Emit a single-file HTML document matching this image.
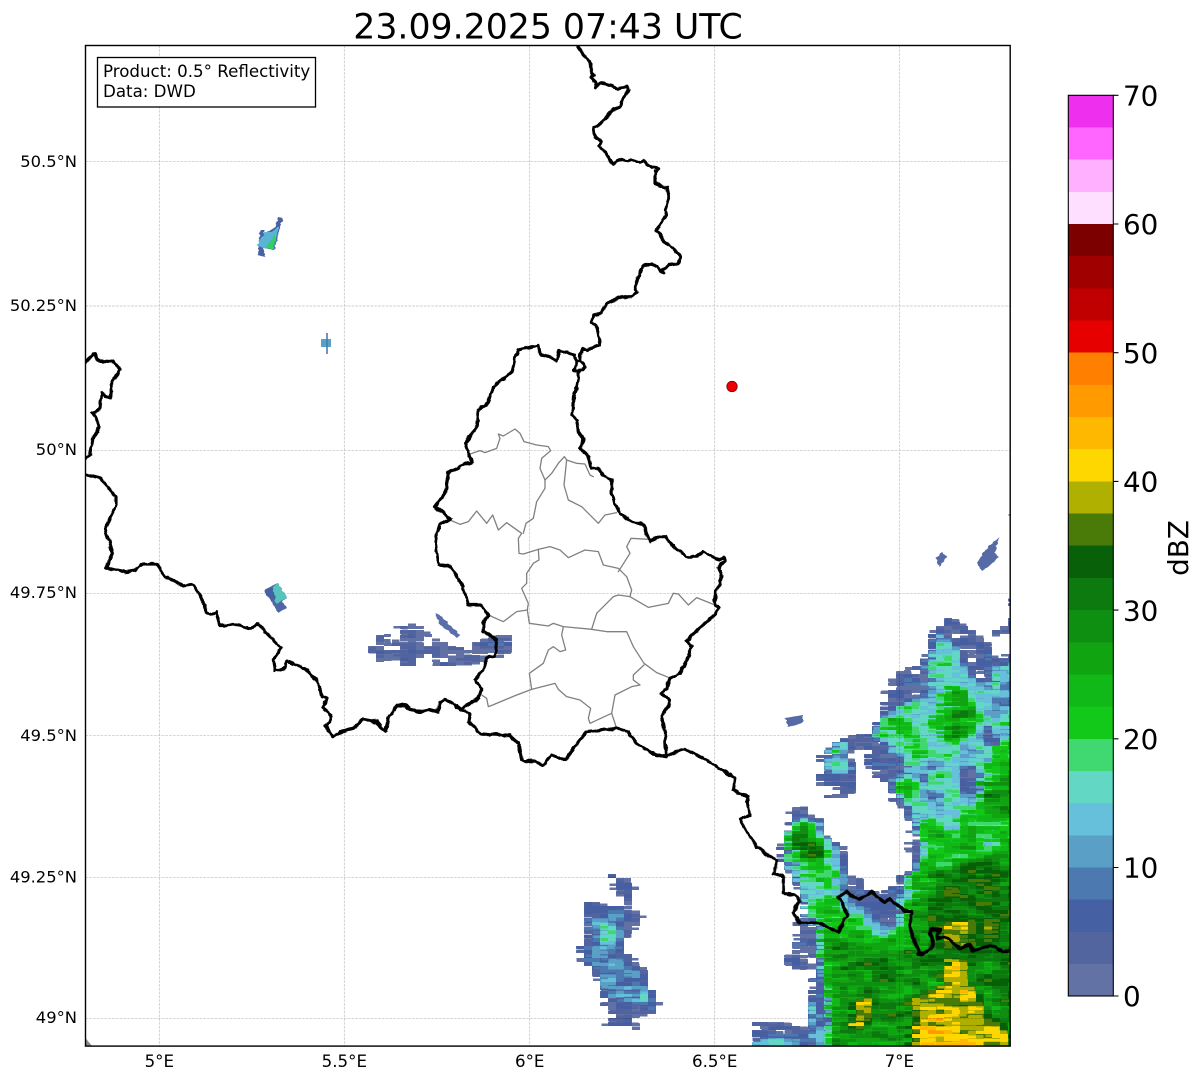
<!DOCTYPE html>
<html lang="en">
<head>
<meta charset="utf-8">
<title>23.09.2025 07:43 UTC</title>
<style>
html,body{margin:0;padding:0;background:#fff}
svg{display:block;font-family:"DejaVu Sans","Liberation Sans",sans-serif}
.b{fill:none;stroke:#000;stroke-width:9.5;stroke-linejoin:round;stroke-linecap:round}
.g{fill:none;stroke:#808080;stroke-width:3.9;stroke-linejoin:round;stroke-linecap:round}
.t{font-size:16.67px;fill:#000}
.l{font-size:16.35px;fill:#000}
.c{font-size:27.78px;fill:#000}
</style>
</head>
<body>
<svg xmlns="http://www.w3.org/2000/svg" width="1202" height="1081" viewBox="0 0 1202 1081">
<defs>
<clipPath id="ax"><rect x="85.5" y="45.5" width="924.5" height="1000.5"/></clipPath>
<filter id="radar" filterUnits="userSpaceOnUse" x="40" y="10" width="1020" height="1070" color-interpolation-filters="sRGB">
<feGaussianBlur in="SourceGraphic" stdDeviation="2.4" result="f"/>
<feTurbulence type="fractalNoise" baseFrequency="0.04 0.3" numOctaves="2" seed="7" result="t1"/>
<feColorMatrix in="t1" type="matrix" values="1 0 0 0 0  0 0 0 0 .5  1 0 0 0 0  0 0 0 0 1" result="n1"/>
<feDisplacementMap in="f" in2="n1" scale="16" xChannelSelector="R" yChannelSelector="G" result="d"/>
<feColorMatrix in="n1" type="matrix" values="1 0 0 0 0  1 0 0 0 0  1 0 0 0 0  0 0 0 0 1" result="n1g"/>
<feComposite in="d" in2="n1g" operator="arithmetic" k1="0" k2="1" k3=".15" k4="-.075" result="s1"/>
<feTurbulence type="fractalNoise" baseFrequency="0.05 0.1" numOctaves="1" seed="3" result="t2"/>
<feColorMatrix in="t2" type="matrix" values="1 0 0 0 0  1 0 0 0 0  1 0 0 0 0  0 0 0 0 1" result="n2"/>
<feComposite in="s1" in2="n2" operator="arithmetic" k1="0" k2="1" k3=".2" k4="-.13" result="s2"/>
<feFlood x="43" y="11" width="2" height="2" flood-color="#fff" flood-opacity="1"/>
<feComposite width="8" height="4"/>
<feTile result="grid"/>
<feComposite in="s2" in2="grid" operator="in"/>
<feMorphology operator="dilate" radius="3 1" result="mosaic"/>
<feComponentTransfer in="mosaic">
<feFuncR type="discrete" tableValues="1 1 1 1 1 1 1 1 1 1 1 1 .384 .322 .271 .298 .353 .4 .384 .251 .071 .063 .063 .059 .047 .031 .29 .69 1 1 1 1 .902 .753 .627 .486"/>
<feFuncG type="discrete" tableValues="1 1 1 1 1 1 1 1 1 1 1 1 .447 .396 .376 .478 .624 .753 .847 .847 .784 .722 .647 .561 .478 .376 .478 .69 .843 .722 .608 .502 0 0 0 0"/>
<feFuncB type="discrete" tableValues="1 1 1 1 1 1 1 1 1 1 1 1 .643 .624 .639 .69 .773 .863 .769 .439 .094 .094 .063 .071 .055 .031 .031 0 0 0 0 0 0 0 0 0"/>
</feComponentTransfer>
<feGaussianBlur stdDeviation=".35"/>
</filter>
<filter id="jag" filterUnits="userSpaceOnUse" x="85" y="45" width="926" height="1002" color-interpolation-filters="sRGB">
<feTurbulence type="fractalNoise" baseFrequency="0.05 0.4" numOctaves="1" seed="11" result="t"/>
<feColorMatrix in="t" type="matrix" values="1 0 0 0 0  0 0 0 0 .5  1 0 0 0 0  0 0 0 0 1" result="n"/>
<feDisplacementMap in="SourceGraphic" in2="n" scale="4" xChannelSelector="R" yChannelSelector="G"/>
</filter>
<filter id="wig" filterUnits="userSpaceOnUse" x="85" y="45" width="926" height="1002" color-interpolation-filters="sRGB">
<feTurbulence type="fractalNoise" baseFrequency="0.13" numOctaves="2" seed="5" result="t"/>
<feColorMatrix in="t" type="matrix" values="1 0 0 0 0  0 1 0 0 0  0 0 1 0 0  0 0 0 0 1" result="n"/>
<feDisplacementMap in="SourceGraphic" in2="n" scale="4" xChannelSelector="R" yChannelSelector="G"/>
</filter>
</defs>

<rect width="1202" height="1081" fill="#fff"/>

<g clip-path="url(#ax)">
<rect x="85" y="45" width="926" height="1002" fill="#fff"/>
<!-- grid -->
<g stroke="#bdbdbd" stroke-width=".7" stroke-dasharray="2.6 1.2" fill="none">
<path d="M85.5 161.3H1010M85.5 306H1010M85.5 450.3H1010M85.5 593.3H1010M85.5 735.7H1010M85.5 877.7H1010M85.5 1018.3H1010"/>
<path d="M159.3 45.5V1046M344.3 45.5V1046M529.7 45.5V1046M714.7 45.5V1046M899.3 45.5V1046"/>
</g>

<!-- radar echoes: reflectivity field mapped through the colour scale -->
<g filter="url(#radar)" style="mix-blend-mode:multiply">
<rect x="0" y="0" width="1202" height="1081" fill="#2a2a2a"/>

<!-- centre band -->
<path d="M368 647 373 644 377 638 385 633 392 648 402 637 398 625 410 623 427 628 440 640 452 645 460 648 468 645 476 641 490 637 505 632 517 645 510 655 502 658 490 662 473 663 463 667 453 667 435 662 425 655 410 668 395 660 388 662 380 660 370 650Z" fill="#626262" stroke="#626262" stroke-width="4"/>

<!-- bottom-centre blob -->
<g transform="translate(560 860) scale(.33333)">
<path d="M155 43 205 55 195 78 225 85 220 110 170 103 170 85 148 72Z" fill="#646464" stroke="#646464" stroke-width="14"/>
<path d="M75 128 120 135 160 125 215 125 215 150 240 158 232 215 200 220 190 275 218 290 215 310 240 310 270 340 265 390 295 392 290 450 255 465 220 470 215 495 248 500 245 510 150 490 155 450 128 440 130 400 108 350 85 335 85 305 60 295 70 255 90 170 70 150Z" fill="#686868" stroke="#686868" stroke-width="14"/>
<path d="M95 165 165 155 210 170 178 285 200 310 250 350 265 420 220 445 170 440 135 400 120 340 75 290 80 250Z" fill="#747474"/>
<path d="M122 170 170 170 172 200 160 290 105 262 130 225Z" fill="#7e7e7e"/>
<path d="M128 210 170 200 160 270 105 255Z" fill="#888"/>
<path d="M200 392 265 385 262 430 200 430Z" fill="#7a7a7a"/>
<path d="M232 392 265 385 262 426 232 424Z" fill="#8a8a8a"/>
</g>

<!-- main mass -->
<g transform="translate(750 600) scale(.33333)">
<path d="M-20 1400 12 1318 12 1265 75 1258 112 1272 165 1278 182 1262 170 1240 205 1235 180 1205 165 1165 195 1160 195 1110 130 1108 95 1078 125 1070 122 1030 145 1020 140 965 165 930 160 880 130 870 118 825 90 780 92 728 110 725 108 690 130 670 122 620 165 615 190 628 195 645 222 660 228 710 262 725 285 735 300 820 335 828 345 860 405 885 430 850 455 820 490 795 510 780 480 780 472 735 495 720 475 670 450 620 425 610 440 590 410 560 370 525 355 490 360 440 300 460 325 540 295 595 230 605 225 575 198 558 215 520 205 490 222 460 270 420 310 405 355 405 375 385 385 350 395 330 405 290 405 255 440 220 470 205 515 195 520 170 545 130 545 95 600 50 640 75 680 95 720 130 735 180 840 140 840 100 725 110 750 75 775 45 790 -40 860 -40 860 1420 -20 1420Z" fill="#646464" stroke="#646464" stroke-width="10" stroke-linejoin="round"/>
<!-- mid blue -->
<path d="M0 1420 15 1320 110 1300 200 1290 235 1420Z" fill="#747474"/>
<path d="M15 1420 20 1318 110 1312 115 1420Z" fill="#828282"/>
<!-- cyan upper -->
<path d="M375 385 410 340 480 300 530 290 545 190 575 100 615 130 640 200 700 260 735 190 860 160 860 730 700 770 560 800 480 845 520 785 510 720 480 640 440 560 420 490 440 430 380 430Z" fill="#858585"/>
<!-- hook -->
<path d="M240 462 290 420 300 450 295 520 240 530 228 490Z" fill="#858585"/>
<path d="M225 530 300 525 298 590 232 600 205 555Z" fill="#646464"/>
<!-- lower-left cyan band -->
<path d="M105 730 125 690 200 660 225 720 270 750 290 850 280 872 345 900 440 955 465 930 530 880 560 800 480 845 440 900 510 1010 440 1010 360 990 290 990 215 990 200 1180 230 1420 185 1420 190 1170 205 1100 200 980 165 920 155 880 135 830 110 790Z" fill="#858585"/>
<path d="M300 890 345 880 405 905 455 935 430 980 380 970 340 930Z" fill="#6a6a6a"/>
<path d="M380 930 410 920 450 940 430 970 400 960Z" fill="#666"/>
<path d="M330 960 370 960 410 1000 450 980 470 950 480 1000 420 1010 370 1010Z" fill="#858585"/>
<path d="M165 1000 205 985 215 1100 155 1108 130 1070 160 1040Z" fill="#666"/>
<!-- dark-blue patches on cyan -->
<path d="M375 440 465 470 465 520 410 560 360 520Z" fill="#646464"/>
<path d="M620 510 680 490 690 580 640 590Z" fill="#686868"/>
<path d="M695 370 760 430 720 450 690 420Z" fill="#686868"/>
<path d="M495 515 540 530 520 560Z" fill="#686868"/>
<path d="M545 590 575 590 570 620 550 615Z" fill="#686868"/>
<path d="M440 610 480 620 505 660 480 660Z" fill="#666"/>
<path d="M470 730 510 730 510 780 480 780Z" fill="#666"/>
<path d="M645 640 690 625 710 680 660 660Z" fill="#6c6c6c"/>
<path d="M700 240 745 200 860 260 860 300 730 330Z" fill="#747474"/>
<!-- light-green flecks -->
<path d="M580 170 605 165 610 215 575 230Z" fill="#929292"/>
<path d="M735 220 760 210 750 270 725 280Z" fill="#929292"/>
<path d="M255 440 285 430 262 480Z" fill="#929292"/>
<path d="M560 530 590 525 590 545 570 545Z" fill="#989898"/>
<path d="M615 620 660 580 650 620 625 640Z" fill="#929292"/>
<!-- greens -->
<path d="M395 370 440 340 470 350 500 395 540 450 545 475 490 475 460 420 410 385Z" fill="#9b9b9b"/>
<path d="M545 375 600 250 640 260 700 370 650 410 610 445 580 410Z" fill="#9b9b9b"/>
<path d="M605 270 635 270 690 375 625 425 590 385Z" fill="#a6a6a6"/>
<path d="M430 560 480 530 505 590 460 600Z" fill="#9b9b9b"/>
<path d="M700 590 715 490 770 415 860 405 860 770 710 740 680 690 620 700 640 640Z" fill="#9b9b9b"/>
<path d="M700 570 740 530 860 490 860 660 720 650Z" fill="#a6a6a6"/>
<path d="M220 1420 240 1250 215 1100 205 985 290 975 320 940 370 1000 410 1010 470 950 490 880 480 830 530 770 510 695 545 630 590 700 620 700 670 680 700 750 860 690 860 1420Z" fill="#9b9b9b"/>
<path d="M105 720 120 680 175 650 205 700 225 715 230 790 235 860 195 840 150 790Z" fill="#9b9b9b"/>
<path d="M130 700 165 670 210 730 235 770 170 790 140 750Z" fill="#a8a8a8"/>
<path d="M145 725 215 735 210 768 165 775Z" fill="#b5b5b5"/>
<path d="M135 700 170 695 170 715 140 715Z" fill="#c0c0c0"/>
<path d="M185 732 212 735 210 745 185 745Z" fill="#c0c0c0"/>
<path d="M165 910 265 890 295 955 270 985 210 965 170 950Z" fill="#9b9b9b"/>
<!-- dark greens -->
<path d="M240 1420 262 1200 240 1050 290 1020 380 1040 470 1060 500 990 490 900 540 830 590 790 860 740 860 1420Z" fill="#a9a9a9"/>
<path d="M480 1100 530 1050 540 870 600 810 860 770 860 1110 700 1080 600 1090Z" fill="#b6b6b6"/>
<path d="M345 1080 410 1070 435 1160 370 1140Z" fill="#b6b6b6"/>
<path d="M265 1030 335 1020 345 1060 270 1080Z" fill="#b0b0b0"/>
<path d="M280 1250 330 1220 320 1290 280 1290Z" fill="#b4b4b4"/>
<path d="M590 960 670 950 680 1040 600 1020Z" fill="#c6c6c6"/>
<path d="M680 1120 860 1100 860 1230 740 1200Z" fill="#b6b6b6"/>
<!-- yellows -->
<path d="M480 1195 570 1165 595 1075 645 1075 665 1165 710 1225 775 1290 810 1420 455 1420 490 1280Z" fill="#c7c7c7"/>
<path d="M310 1220 340 1185 370 1190 372 1260 320 1285Z" fill="#c4c4c4"/>
<path d="M312 1262 345 1255 345 1285 315 1285Z" fill="#cccccc"/>
<path d="M582 1140 610 1100 645 1105 625 1160 590 1165Z" fill="#cfcfcf"/>
<path d="M500 1240 600 1215 640 1250 710 1265 760 1295 800 1420 495 1420Z" fill="#cdcdcd"/>
<path d="M555 1245 595 1250 595 1295 560 1285Z" fill="#d2d2d2"/>
<path d="M578 998 605 1000 590 1020Z" fill="#cacaca"/>
</g>
</g>

<!-- small echoes -->
<g filter="url(#jag)">
<path d="M258 255 260 230 264 230 264 234 275 227 278 217 283 218 280 227 277 240 274 250 263 248 265 257Z" fill="#4a62a4"/>
<path d="M257 245 265 232 272 232 277 227 279 227 275 242 273 249 263 248Z" fill="#5ab4d4"/>
<path d="M265 248 275 235 275 242 272 249Z" fill="#2fd25e"/>
<path d="M264 590 278 583 287 598 282 602 287 608 278 613 272 602Z" fill="#4f66a4"/>
<path d="M272 588 278 583 287 598 276 604Z" fill="#56c4bc"/>
<path d="M264 590 272 587 276 598 270 600Z" fill="#4560a3"/>
<path d="M435 613 440 615 460 635 457 638 440 625Z" fill="#5a6ea8"/>
<path d="M936 558 942 552 947 557 939 567Z" fill="#566aa5"/>
<path d="M977 563 985 550 999 537 995 553 999 557 988 567 982 571Z" fill="#566aa5"/>
<path d="M785 718 790 717 803 715 803 723 788 727Z" fill="#566aa5"/>
</g>
<path d="M321 339H331V347H321Z" fill="#5a9fc5"/><path d="M327 333V354" stroke="#4c7ab0" stroke-width="1.6"/>
<path d="M1008 515 1011 513V517Z" fill="#566aa5"/>
<path d="M85.5 1038 92 1046H85.5Z" fill="#8a8a8a"/>

<!-- grey admin lines -->
<g transform="translate(420 330) scale(.33333)">
<path class="g" d="M150 372 180 362 195 368 230 355 240 325 235 312 250 318 285 297 300 310 312 335 350 345 385 350 392 362 365 385 360 415 375 450"/>
<path class="g" d="M375 450 395 430 415 400 433 380 440 390 470 400 495 402 510 435 520 440"/>
<path class="g" d="M440 390 432 465 445 510 485 530 535 580 555 555 590 548"/>
<path class="g" d="M375 450 375 475 350 515 340 565 318 580 310 610"/>
<path class="g" d="M90 570 120 583 145 575 170 543 200 580 218 555 235 600 260 578 305 610 295 625 297 670 310 672 355 658 390 650 420 660 445 683 495 660 535 665 550 705 595 715 620 740 635 780 630 800"/>
<path class="g" d="M595 725 630 670 620 650 633 625 685 628"/>
<path class="g" d="M355 658 357 690 340 700 320 730 320 760 305 775 325 820 322 840 328 880 385 888 400 880 430 890 515 898"/>
<path class="g" d="M322 840 290 845 250 875 205 855"/>
<path class="g" d="M515 898 530 850 580 800 595 795 630 800 685 832 745 820 760 790 775 792 805 825 830 803 885 825"/>
<path class="g" d="M515 898 560 905 620 905 640 950 672 1000 710 1028 745 1042"/>
<path class="g" d="M430 890 425 915 437 960 420 965 400 950 385 960 370 1000 328 1030 335 1078"/>
<path class="g" d="M672 1005 640 1035 640 1050 660 1065 635 1070 585 1095 575 1150 590 1195"/>
<path class="g" d="M575 1150 510 1180 505 1165 512 1135 480 1110 440 1100 415 1078 405 1060 335 1078"/>
<path class="g" d="M335 1078 290 1095 218 1125 205 1130 200 1105 185 1095"/>
</g>

<!-- national borders -->
<g filter="url(#wig)">
<g transform="translate(560 40) scale(.33333)">
<path class="b" d="M50 10 70 45 88 65 95 90 100 105 92 115 108 130 105 145 118 130 150 135 170 145 200 140 207 150 195 170 183 185 180 200 160 208 140 230 125 248 100 265 105 290 125 305 115 320 135 335 158 372 185 358 205 362 215 358 235 368 250 362 278 380 295 385 285 395 285 430 322 443 327 470 315 510 318 525 300 555 288 572 315 605 345 630 360 650 355 670 325 675 305 690 310 700 275 670 248 680 240 700 225 740 230 755 215 770 190 770 140 790 125 820 102 825 93 848 108 860 115 880 120 915 80 930 68 925 62 950"/>
</g>
<g transform="translate(420 330) scale(.33333)">
<path class="b" d="M482 75 480 92 498 110 485 122 462 122 470 95 480 92M478 125 470 175 462 200 460 235 455 255 470 270 475 305 490 325 482 355 505 380 515 415 535 415 550 440 575 450 575 490 585 520 600 550 640 575 670 585 685 625 690 635 710 620 735 620 760 650 800 680 830 680 850 665 880 685 900 690 912 680 915 692 895 715 905 740 900 765 885 785 885 825 900 835 885 855 850 885 820 910 800 935 815 950 800 990 780 1030 750 1045 740 1075 725 1090 750 1110 745 1130 725 1160 735 1210 738 1280"/>
<path class="b" d="M470 95 465 75 420 60 410 90 360 70 355 45 295 60 285 85 275 125 220 170 205 220 175 240 170 290 135 340 155 395 120 410 85 430 75 490 45 530 90 565 60 585 45 630 55 705 90 710 130 770 145 825 180 825 205 855 190 880 190 905 230 930 225 980 200 985 190 1020 165 1050 185 1075 175 1105 130 1135 120 1140 150 1150 145 1175 180 1210 240 1215 270 1218 295 1240 305 1290 345 1295 370 1305 395 1275 435 1290 465 1250 500 1205 590 1195 625 1205 650 1240 695 1270 735 1280 795 1255 830 1275 870 1295 905 1320"/>
</g>
<path d="M721.7 770 735 778 733 790 747 797 750 815 740 820 750 837" fill="none" stroke="#000" stroke-width="3.1" stroke-linejoin="round"/>
<g transform="translate(750 600) scale(.33333)">
<path class="b" d="M0 710 20 740 60 770 80 780 72 820 100 830 100 880 135 885 150 905 128 935 150 970 210 968 265 998 280 960 295 950 265 890 290 875 325 900 365 875 405 908 420 897 460 930 485 932 480 980 505 1060 520 1062 550 1035 540 990 570 990 560 1015 585 1010 630 1045 660 1035 670 1055 720 1035 760 1055 785 1050"/>
</g>
<g transform="translate(80 340) scale(.33333)">
<path class="b" d="M10 75 42 40 50 62 100 65 122 90 95 125 95 175 80 170 65 160 60 205 38 218 50 245 60 260 40 290 30 345 10 362"/>
<path class="b" d="M10 401 65 415 80 440 108 470 108 500 75 565 85 600 97 640 78 685 90 685 135 695 165 690 185 672 230 672 255 708 310 738 340 733 375 795 375 815 395 825 410 815 420 855 470 855 510 865 535 852 605 925 580 960 585 993 615 985 622 962 675 985 715 1025 725 1070 740 1075 728 1100 755 1130 750 1145 735 1155 758 1190 780 1175 820 1165 850 1138 890 1145 915 1175 925 1135 950 1100 970 1095 1015 1117 1045 1110 1075 1115 1080 1085 1095 1078 1140 1105"/>
</g>
</g>

<circle cx="732" cy="386.5" r="5.2" fill="#f00000" stroke="#700" stroke-width=".8"/>
</g>

<!-- axes frame -->
<rect x="85.5" y="45.5" width="924.7" height="1000.6" fill="none" stroke="#000" stroke-width="1.4"/>

<!-- legend -->
<rect x="97.5" y="57.5" width="218" height="49.5" fill="#fff" stroke="#000" stroke-width="1.3"/>
<text x="103" y="77" class="t">Product: 0.5° Reflectivity</text>
<text x="103" y="97" class="t">Data: DWD</text>

<!-- title -->
<text x="548" y="38.5" text-anchor="middle" font-size="34.7" fill="#000">23.09.2025 07:43 UTC</text>

<!-- tick labels -->
<g class="l" text-anchor="end">
<text x="77" y="167">50.5°N</text>
<text x="77" y="311">50.25°N</text>
<text x="77" y="455">50°N</text>
<text x="77" y="598">49.75°N</text>
<text x="77" y="741">49.5°N</text>
<text x="77" y="882.5">49.25°N</text>
<text x="77" y="1023">49°N</text>
</g>
<g class="t" text-anchor="middle">
<text x="159.3" y="1067">5°E</text>
<text x="344.3" y="1067">5.5°E</text>
<text x="529.7" y="1067">6°E</text>
<text x="714.7" y="1067">6.5°E</text>
<text x="899.3" y="1067">7°E</text>
</g>

<!-- colorbar -->
<g shape-rendering="crispEdges">
<rect x="1068" y="95.3" width="45.3" height="32.6" fill="#ee30ee"/>
<rect x="1068" y="127.5" width="45.3" height="32.6" fill="#ff66ff"/>
<rect x="1068" y="159.6" width="45.3" height="32.6" fill="#ffb0ff"/>
<rect x="1068" y="191.8" width="45.3" height="32.6" fill="#ffdfff"/>
<rect x="1068" y="224" width="45.3" height="32.6" fill="#7c0000"/>
<rect x="1068" y="256.2" width="45.3" height="32.6" fill="#a00000"/>
<rect x="1068" y="288.3" width="45.3" height="32.6" fill="#c00000"/>
<rect x="1068" y="320.5" width="45.3" height="32.6" fill="#e60000"/>
<rect x="1068" y="352.7" width="45.3" height="32.6" fill="#ff8000"/>
<rect x="1068" y="384.9" width="45.3" height="32.6" fill="#ff9b00"/>
<rect x="1068" y="417" width="45.3" height="32.6" fill="#ffb800"/>
<rect x="1068" y="449.2" width="45.3" height="32.6" fill="#ffd700"/>
<rect x="1068" y="481.4" width="45.3" height="32.6" fill="#b0b000"/>
<rect x="1068" y="513.6" width="45.3" height="32.6" fill="#4a7a08"/>
<rect x="1068" y="545.7" width="45.3" height="32.6" fill="#086008"/>
<rect x="1068" y="577.9" width="45.3" height="32.6" fill="#0c7a0e"/>
<rect x="1068" y="610.1" width="45.3" height="32.6" fill="#0f8f12"/>
<rect x="1068" y="642.3" width="45.3" height="32.6" fill="#10a510"/>
<rect x="1068" y="674.4" width="45.3" height="32.6" fill="#10b818"/>
<rect x="1068" y="706.6" width="45.3" height="32.6" fill="#12c818"/>
<rect x="1068" y="738.8" width="45.3" height="32.6" fill="#40d870"/>
<rect x="1068" y="771" width="45.3" height="32.6" fill="#62d8c4"/>
<rect x="1068" y="803.1" width="45.3" height="32.6" fill="#66c0dc"/>
<rect x="1068" y="835.3" width="45.3" height="32.6" fill="#5a9fc5"/>
<rect x="1068" y="867.5" width="45.3" height="32.6" fill="#4c7ab0"/>
<rect x="1068" y="899.7" width="45.3" height="32.6" fill="#4560a3"/>
<rect x="1068" y="931.8" width="45.3" height="32.6" fill="#52659f"/>
<rect x="1068" y="964" width="45.3" height="32" fill="#6272a4"/>
</g>
<rect x="1068.3" y="95.3" width="45" height="900.7" fill="none" stroke="#000" stroke-width="1.1"/>
<path d="M1113 95.3h5.5M1113 224h5.5M1113 352.7h5.5M1113 481.4h5.5M1113 610.1h5.5M1113 738.8h5.5M1113 867.5h5.5M1113 996h5.5" stroke="#000" stroke-width="1.1"/>
<g class="c">
<text x="1123" y="105.5">70</text>
<text x="1123" y="234.2">60</text>
<text x="1123" y="362.9">50</text>
<text x="1123" y="491.6">40</text>
<text x="1123" y="620.3">30</text>
<text x="1123" y="749">20</text>
<text x="1123" y="877.7">10</text>
<text x="1123" y="1006.2">0</text>
</g>
<text transform="translate(1188 548) rotate(-90)" text-anchor="middle" class="c">dBZ</text>
</svg>
</body>
</html>
